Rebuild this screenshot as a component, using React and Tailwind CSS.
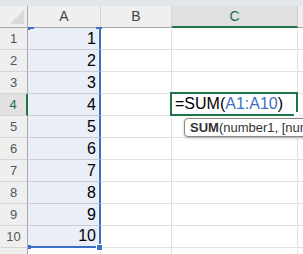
import React from "react";

const rows = [1, 2, 3, 4, 5, 6, 7, 8, 9, 10, 11];

export default function App() {
  return (
    <div className="w-[303px] h-[254px] overflow-hidden bg-white" style={{ fontFamily: '"Liberation Sans", Arial, sans-serif' }}>
      <div className="h-[6px] bg-[#e3e6ea]" />
      <div className="relative">
        <div className="grid grid-cols-[28px_73px_71px_126px_60px] auto-rows-[22px]">
          {/* header row */}
          <div className="relative bg-[#efefef] border-r border-b border-[#a8a8a8]">
            <div className="absolute right-[3px] bottom-[3px] w-0 h-0 border-l-[14px] border-l-transparent border-b-[14px] border-b-[#d9d9d9]" />
          </div>
          <div className="bg-[#efefef] border-r border-r-[#d4d4d4] border-b border-b-[#a8a8a8] flex items-center justify-center text-[14px] text-[#444]">A</div>
          <div className="bg-[#efefef] border-r border-r-[#d4d4d4] border-b border-b-[#a8a8a8] flex items-center justify-center text-[14px] text-[#444]">B</div>
          <div className="bg-[#e1e1e1] border-r border-r-[#c8c8c8] border-b-2 border-b-[#217346] flex items-center justify-center text-[14px] text-[#1b6b4a]">C</div>
          <div className="bg-[#efefef] border-b border-b-[#a8a8a8]" />

          {rows.map((r) => (
            <React.Fragment key={r}>
              <div
                className={
                  r === 4
                    ? "bg-[#e1e1e1] border-r-2 border-r-[#217346] border-b border-b-[#d4d4d4] flex items-center justify-center text-[13px] text-[#1b6b4a]"
                    : "bg-[#efefef] border-r border-r-[#a8a8a8] border-b border-b-[#d4d4d4] flex items-center justify-center text-[13px] text-[#555]"
                }
              >
                {r <= 10 ? r : ""}
              </div>
              <div
                className={
                  r === 10
                    ? "bg-[#e9eef7] border-r-2 border-r-[#3b6fc6] border-b-2 border-b-[#3b6fc6] flex items-center justify-end pr-[3px] text-[16px] text-black"
                    : r < 10
                    ? "bg-[#e9eef7] border-r-2 border-r-[#3b6fc6] border-b border-b-[#c9ced6] flex items-center justify-end pr-[3px] text-[16px] text-black"
                    : "bg-white border-r border-b border-[#e1e1e1]"
                }
              >
                {r <= 10 ? r : ""}
              </div>
              <div className="bg-white border-r border-b border-[#e1e1e1]" />
              <div className="bg-white border-r border-b border-[#e1e1e1]" />
              <div className="bg-white border-b border-[#e1e1e1]" />
            </React.Fragment>
          ))}
        </div>

        {/* selection corner marks A1:A10 */}
        <div className="absolute left-[28px] top-[21px] w-[6px] h-[2px] bg-[#3b6fc6]" />
        <div className="absolute left-[28px] top-[22px] w-[2px] h-[2px] bg-[#3b6fc6]" />
        <div className="absolute left-[96px] top-[21px] w-[6px] h-[2px] bg-[#3b6fc6]" />
        <div className="absolute left-[28px] top-[239px] w-[3px] h-[4px] bg-[#3b6fc6]" />
        <div className="absolute left-[96px] top-[238px] w-[7px] h-[7px] bg-[#3b6fc6] border border-white" />

        {/* active editing cell C4 */}
        <div className="absolute left-[170px] top-[86px] w-[128px] h-[24px] border-2 border-[#217346] bg-white flex items-center pl-[3px] text-[16px] text-black whitespace-nowrap">
          <span>=SUM(</span>
          <span className="text-[#3b6fc6]">A1:A10</span>
          <span>)</span>
          <span className="absolute right-[-3px] bottom-[-3px] w-[5px] h-[5px] bg-white" />
        </div>

        {/* tooltip */}
        <div className="absolute left-[184px] top-[112px] h-[19px] w-[140px] bg-white border border-[#8a8a8a] rounded-[4px] shadow-[0_1px_3px_rgba(0,0,0,0.25)] flex items-center pl-[5px] text-[13px] text-[#333] whitespace-nowrap overflow-hidden">
          <span className="font-bold">SUM</span>
          <span>(number1, [number2], ...)</span>
        </div>
      </div>
    </div>
  );
}
